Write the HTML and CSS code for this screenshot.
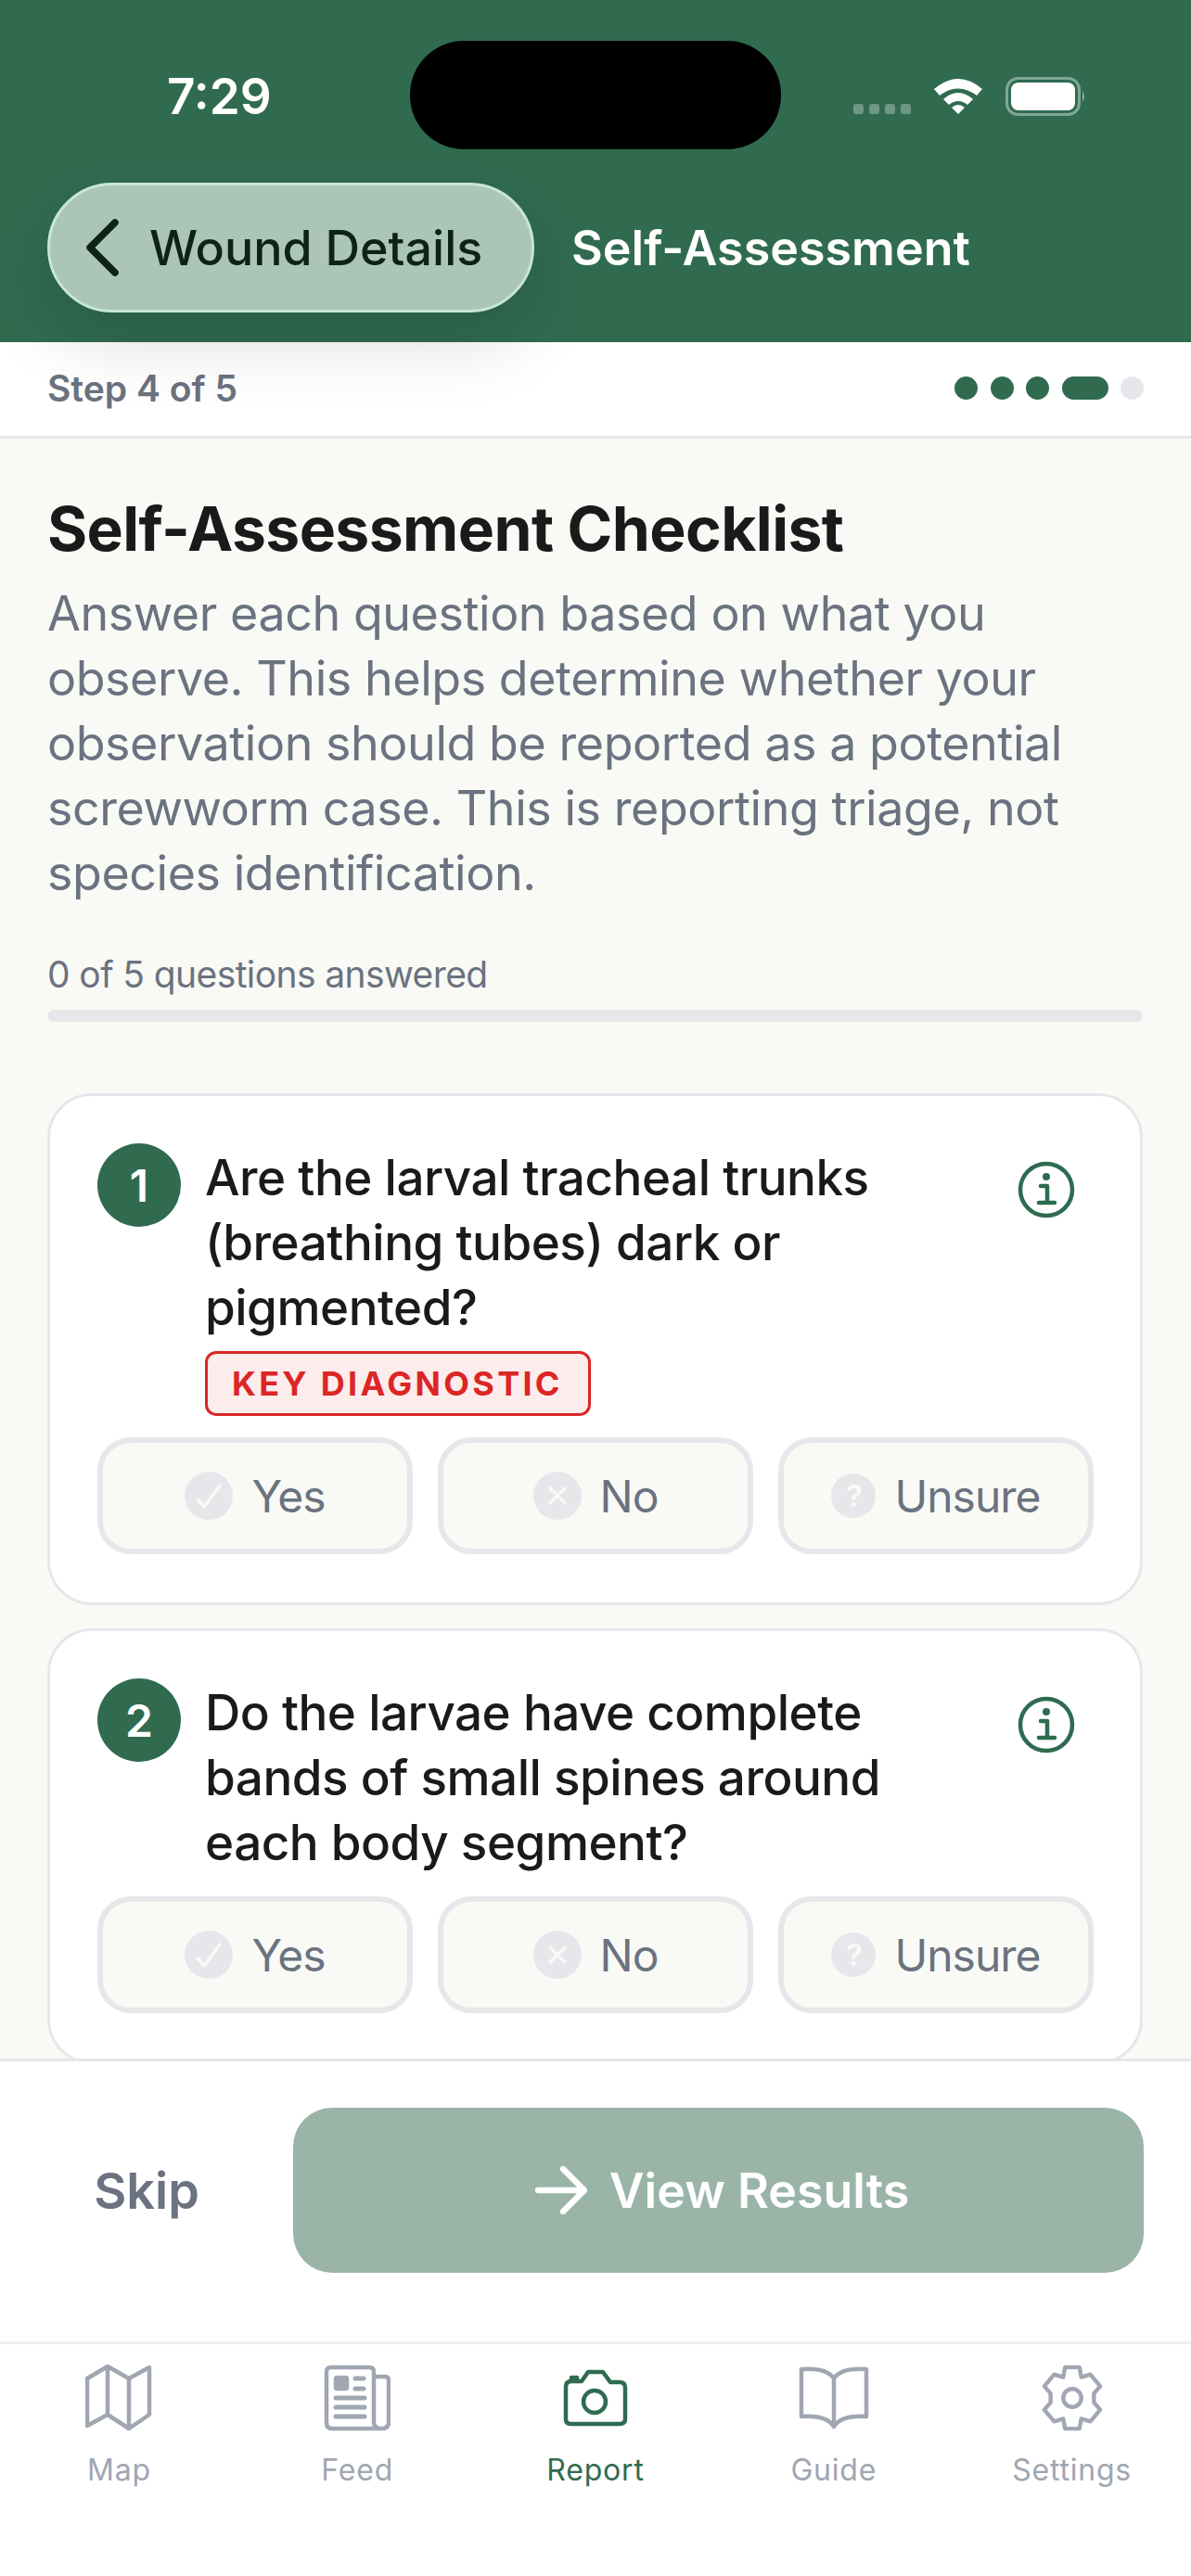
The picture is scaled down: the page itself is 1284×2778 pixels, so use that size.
FILE: index.html
```html
<!DOCTYPE html>
<html lang="en">
<head>
    <meta charset="UTF-8">
    <title>Self-Assessment</title>
    <link rel="stylesheet" href="styles.css">
</head>
<body>
<div class="app">

    <header class="top">
        <div class="island"></div>
        <div class="status">
            <span class="time">7:29</span>
            <div class="status-icons">
                <div class="signal"><i></i><i></i><i></i><i></i></div>
                <svg class="wifi" width="54" height="40" viewBox="0 0 54 40">
                    <path d="M1 13 Q27 -9 53 13 L47 20 Q27 5 7 20Z" fill="#fff"/>
                    <path d="M11 24 Q27 10 43 24 L37 30 Q27 22 17 30Z" fill="#fff"/>
                    <path d="M20 33 Q27 27 34 33 L27 40Z" fill="#fff"/>
                </svg>
                <svg class="battery" width="88" height="42" viewBox="0 0 88 42">
                    <rect x="1.5" y="1.5" width="78" height="39" rx="12" fill="none" stroke="#fff" stroke-opacity="0.4" stroke-width="3"/>
                    <rect x="6" y="6" width="69" height="30" rx="8" fill="#fff"/>
                    <path d="M83 15 Q87 21 83 27Z" fill="#fff" fill-opacity="0.45"/>
                </svg>
            </div>
        </div>
        <div class="nav">
            <button class="back">
                <svg width="36" height="62" viewBox="0 0 36 62">
                    <path d="M32 4 L5 31 L32 58" fill="none" stroke="#0b2416" stroke-width="7.5" stroke-linecap="round" stroke-linejoin="round"/>
                </svg>
                <span>Wound Details</span>
            </button>
            <span class="nav-title">Self-Assessment</span>
        </div>
    </header>

    <div class="stepbar">
        <span class="step-text">Step 4 of 5</span>
        <div class="dots">
            <i class="dot on"></i><i class="dot on"></i><i class="dot on"></i><i class="dot on wide"></i><i class="dot"></i>
        </div>
    </div>

    <main class="content">
        <h1>Self-Assessment Checklist</h1>
        <p class="intro">Answer each question based on what you observe. This helps determine whether your observation should be reported as a potential screwworm case. This is reporting triage, not species identification.</p>
        <div class="answered">0 of 5 questions answered</div>
        <div class="progress"></div>

        <section class="card">
            <div class="q-row">
                <div class="num">1</div>
                <div class="q-body">
                    <div class="q-text">Are the larval tracheal trunks (breathing tubes) dark or pigmented?</div>
                    <span class="tag">KEY DIAGNOSTIC</span>
                </div>
                <svg class="info" width="62" height="62" viewBox="0 0 62 62">
                    <circle cx="31" cy="31" r="28" fill="none" stroke="#2f6b50" stroke-width="4.5"/>
                    <circle cx="31" cy="17" r="4" fill="#2f6b50"/>
                    <path d="M25 27 H32 V44 M23 45 H40" fill="none" stroke="#2f6b50" stroke-width="4.5" stroke-linecap="round" stroke-linejoin="round"/>
                </svg>
            </div>
            <div class="answers">
                <button class="answer">
                    <svg class="a-icon" width="52" height="52" viewBox="0 0 52 52"><circle cx="26" cy="26" r="26" fill="#e5e7eb"/><path d="M14 30 L21 38 L38 15" fill="none" stroke="#f9faf5" stroke-width="3.5" stroke-linecap="round" stroke-linejoin="round"/></svg>
                    Yes
                </button>
                <button class="answer">
                    <svg class="a-icon" width="52" height="52" viewBox="0 0 52 52"><circle cx="26" cy="26" r="26" fill="#e5e7eb"/><path d="M18 18 L34 34 M34 18 L18 34" fill="none" stroke="#f9faf5" stroke-width="3.5" stroke-linecap="round"/></svg>
                    No
                </button>
                <button class="answer">
                    <span class="a-mark">?</span>
                    Unsure
                </button>
            </div>
        </section>

        <section class="card">
            <div class="q-row">
                <div class="num">2</div>
                <div class="q-body">
                    <div class="q-text">Do the larvae have complete bands of small spines around each body segment?</div>
                </div>
                <svg class="info" width="62" height="62" viewBox="0 0 62 62">
                    <circle cx="31" cy="31" r="28" fill="none" stroke="#2f6b50" stroke-width="4.5"/>
                    <circle cx="31" cy="17" r="4" fill="#2f6b50"/>
                    <path d="M25 27 H32 V44 M23 45 H40" fill="none" stroke="#2f6b50" stroke-width="4.5" stroke-linecap="round" stroke-linejoin="round"/>
                </svg>
            </div>
            <div class="answers">
                <button class="answer">
                    <svg class="a-icon" width="52" height="52" viewBox="0 0 52 52"><circle cx="26" cy="26" r="26" fill="#e5e7eb"/><path d="M14 30 L21 38 L38 15" fill="none" stroke="#f9faf5" stroke-width="3.5" stroke-linecap="round" stroke-linejoin="round"/></svg>
                    Yes
                </button>
                <button class="answer">
                    <svg class="a-icon" width="52" height="52" viewBox="0 0 52 52"><circle cx="26" cy="26" r="26" fill="#e5e7eb"/><path d="M18 18 L34 34 M34 18 L18 34" fill="none" stroke="#f9faf5" stroke-width="3.5" stroke-linecap="round"/></svg>
                    No
                </button>
                <button class="answer">
                    <span class="a-mark">?</span>
                    Unsure
                </button>
            </div>
        </section>
    </main>

    <div class="actions">
        <button class="skip">Skip</button>
        <button class="results">
            <svg width="56" height="52" viewBox="0 0 56 52">
                <path d="M3 26 H52 M30 3 L53 26 L30 49" fill="none" stroke="#fff" stroke-width="6.5" stroke-linecap="round" stroke-linejoin="round"/>
            </svg>
            View Results
        </button>
    </div>

    <nav class="tabs">
        <div class="tab">
            <svg width="72" height="72" viewBox="0 0 72 72" fill="none" stroke="#a0a6b2" stroke-width="4.5" stroke-linejoin="round" stroke-linecap="round">
                <path d="M2 15 L24 2 L47 15 L69 3 V54 L47 69 L24 54 L2 66Z M24 2 V54 M47 15 V69"/>
            </svg>
            <span>Map</span>
        </div>
        <div class="tab">
            <svg width="72" height="72" viewBox="0 0 72 72" fill="none" stroke="#a0a6b2" stroke-width="4.5" stroke-linejoin="round" stroke-linecap="round">
                <path d="M54 13 H66 Q70 13 70 17 V62 Q70 69 62 69 H9 Q3 69 3 63 V8 Q3 3 8 3 H49 Q54 3 54 8 V62 Q54 69 62 69"/>
                <rect x="13" y="14" width="12" height="12" rx="1.5" fill="#a0a6b2"/>
                <path d="M34 15 H43 M34 26 H43 M13 36 H44 M13 46 H44 M13 56 H44" stroke-width="5"/>
            </svg>
            <span>Feed</span>
        </div>
        <div class="tab active">
            <svg width="72" height="72" viewBox="0 0 72 72" fill="none" stroke="#2f6b50" stroke-width="4.5" stroke-linejoin="round" stroke-linecap="round">
                <path d="M4 24 Q4 18 10 18 H21 L28 8 H44 L52 19 H62 Q68 19 68 25 V59 Q68 64 62 64 H9 Q4 64 4 59Z"/>
                <path d="M10 18 V14 H16 V18"/>
                <circle cx="35" cy="40" r="12"/>
            </svg>
            <span>Report</span>
        </div>
        <div class="tab">
            <svg width="76" height="72" viewBox="0 0 76 72" fill="none" stroke="#a0a6b2" stroke-width="4.5" stroke-linejoin="round" stroke-linecap="round">
                <path d="M38 15 Q30 3 3 5 V56 Q30 54 38 67 Q46 54 73 56 V5 Q46 3 38 15 V67"/>
            </svg>
            <span>Guide</span>
        </div>
        <div class="tab">
            <svg width="72" height="72" viewBox="0 0 72 74" fill="none" stroke="#a0a6b2" stroke-width="4.5" stroke-linejoin="round" stroke-linecap="round">
                <path d="M28 3 H44 L46 14 L56 11 L67 24 L60 32 V42 L67 50 L56 63 L46 60 L44 71 H28 L26 60 L16 63 L5 50 L12 42 V32 L5 24 L16 11 L26 14Z"/>
                <circle cx="36" cy="37" r="10"/>
            </svg>
            <span>Settings</span>
        </div>
    </nav>

</div>
</body>
</html>
```

FILE: styles.css
```css
* {
    box-sizing: border-box;
}

html, body {
    margin: 0;
    padding: 0;
}

body {
    font-family: "Inter", "Liberation Sans", sans-serif;
    background-color: #ffffff;
}

button {
    font-family: inherit;
    border: none;
    padding: 0;
}

.app {
    width: 1284px;
    height: 2778px;
    display: flex;
    flex-direction: column;
    overflow: hidden;
}

/* Header */
.top {
    height: 369px;
    flex: none;
    background-color: #306b50;
    padding: 0 0 0 51px;
    position: relative;
}

.island {
    position: absolute;
    left: 442px;
    top: 44px;
    width: 400px;
    height: 117px;
    border-radius: 58px;
    background-color: #000000;
}

.status {
    height: 197px;
    display: flex;
    justify-content: space-between;
    padding: 74px 0 0 129px;
}

.time {
    color: #ffffff;
    font-size: 53px;
    font-weight: 600;
    line-height: 60px;
}

.status-icons {
    display: flex;
    align-items: flex-start;
    padding-top: 9px;
    margin-right: 112px;
}

.signal {
    display: flex;
    gap: 6px;
    margin-top: 29px;
    margin-right: 24px;
}

.signal i {
    width: 11px;
    height: 11px;
    border-radius: 3px;
    background-color: rgba(255, 255, 255, 0.3);
}

.wifi {
    margin-right: 24px;
}

.nav {
    display: flex;
    align-items: center;
    gap: 40px;
}

.back {
    width: 525px;
    height: 140px;
    flex: none;
    display: flex;
    align-items: center;
    gap: 33px;
    padding-left: 38px;
    border-radius: 70px;
    background-color: #abc6b9;
    border: 3px solid #c6e6d6;
    box-shadow: 0 30px 80px rgba(0, 0, 0, 0.14);
    position: relative;
    z-index: 2;
    color: #0b2416;
    font-size: 52px;
    font-weight: 500;
}

.nav-title {
    color: #ffffff;
    font-size: 52px;
    font-weight: 600;
}

/* Step row */
.stepbar {
    height: 104px;
    flex: none;
    background-color: #ffffff;
    border-bottom: 3px solid #e5e7eb;
    display: flex;
    align-items: center;
    justify-content: space-between;
    padding: 0 51px 2px 51px;
}

.step-text {
    color: #6b7280;
    font-size: 39px;
    font-weight: 600;
}

.dots {
    display: flex;
    gap: 13.5px;
}

.dot {
    width: 25px;
    height: 25px;
    border-radius: 13px;
    background-color: #e5e7eb;
}

.dot.on {
    background-color: #306b50;
}

.dot.wide {
    width: 50px;
}

/* Scrolling content */
.content {
    flex: 1;
    min-height: 0;
    overflow: hidden;
    background-color: #f9faf5;
    padding: 57px 52px 0 51px;
}

h1 {
    margin: 0 0 17px;
    color: #1a1a1a;
    font-size: 66px;
    font-weight: 700;
    letter-spacing: -0.6px;
    line-height: 80px;
}

.intro {
    margin: 0;
    color: #6b7280;
    font-size: 52px;
    letter-spacing: -0.45px;
    line-height: 70px;
}

.answered {
    margin-top: 50px;
    color: #6b7280;
    font-size: 39px;
    letter-spacing: -0.6px;
    line-height: 48px;
}

.progress {
    margin-top: 14px;
    height: 13px;
    border-radius: 7px;
    background-color: #e5e7eb;
}

.card {
    margin-top: 25px;
    background-color: #ffffff;
    border: 3px solid #e5e7eb;
    border-radius: 48px;
    padding: 51px 50px 52px 51px;
}

.progress + .card {
    margin-top: 77px;
}

.q-row {
    display: flex;
    align-items: flex-start;
    gap: 26px;
}

.num {
    width: 90px;
    height: 90px;
    flex: none;
    border-radius: 50%;
    background-color: #306b50;
    color: #ffffff;
    font-size: 48px;
    font-weight: 600;
    display: flex;
    align-items: center;
    justify-content: center;
}

.q-body {
    flex: 1;
    padding-top: 2px;
}

.q-text {
    color: #1a1a1a;
    font-size: 53px;
    font-weight: 500;
    letter-spacing: -0.5px;
    line-height: 70px;
}

.tag {
    display: inline-block;
    margin-top: 12px;
    height: 70px;
    padding: 0 27px 0 26px;
    border: 3px solid #dc2626;
    border-radius: 12px;
    background-color: #fdecec;
    color: #dc2626;
    font-size: 36px;
    font-weight: 700;
    letter-spacing: 3.3px;
    line-height: 64px;
}

.info {
    flex: none;
    margin: 19px 20px 0 0;
}

.answers {
    display: flex;
    gap: 27px;
    margin-top: 23px;
}

.answer {
    flex: 1;
    height: 126px;
    display: flex;
    align-items: center;
    justify-content: center;
    gap: 20px;
    background-color: #f9faf5;
    border: 6px solid #e5e7eb;
    border-radius: 36px;
    color: #6b7280;
    font-size: 48px;
    letter-spacing: -1px;
}

.a-mark {
    width: 48px;
    height: 48px;
    border-radius: 50%;
    background-color: #e5e7eb;
    color: #f9faf5;
    font-size: 33px;
    font-weight: 600;
    line-height: 48px;
    text-align: center;
}

/* Footer actions */
.actions {
    height: 308px;
    flex: none;
    background-color: #ffffff;
    border-top: 3px solid #e5e7eb;
    border-bottom: 3px solid #eeeff2;
    display: flex;
    align-items: flex-start;
    gap: 52px;
    padding: 50px 51px 0 52px;
}

.skip {
    width: 212px;
    height: 178px;
    flex: none;
    background: none;
    color: #6b7280;
    font-size: 54px;
    font-weight: 600;
}

.results {
    flex: 1;
    height: 178px;
    display: flex;
    align-items: center;
    justify-content: center;
    gap: 24px;
    padding-left: 8px;
    border-radius: 42px;
    background-color: #9ab5a7;
    color: #ffffff;
    font-size: 52px;
    font-weight: 600;
}

/* Tab bar */
.tabs {
    height: 250px;
    flex: none;
    display: flex;
    background-color: #ffffff;
    padding-top: 22px;
}

.tab {
    flex: 1;
    display: flex;
    flex-direction: column;
    align-items: center;
    gap: 22px;
    color: #a0a6b2;
    font-size: 32px;
    letter-spacing: 0.8px;
    line-height: 40px;
}

.tab svg {
    display: block;
}

.tab.active {
    color: #306b50;
}
```
